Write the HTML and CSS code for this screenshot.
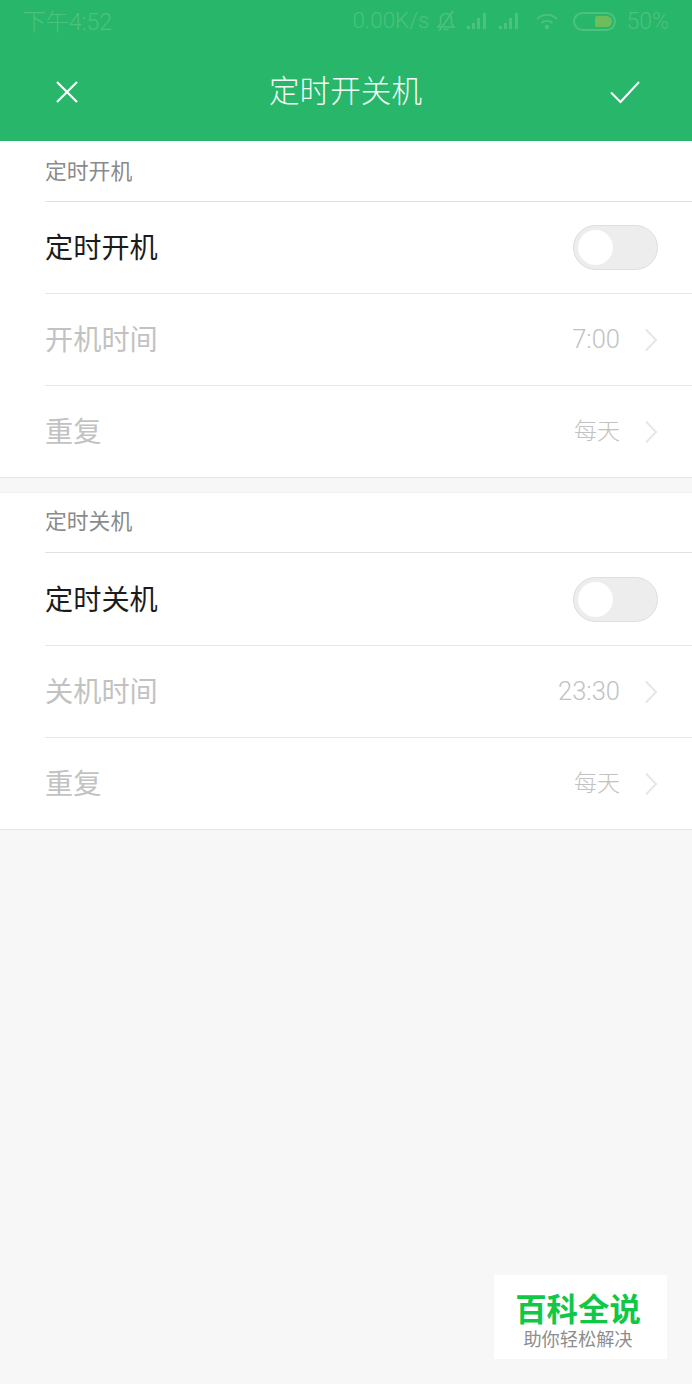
FILE: index.html
```html
<!DOCTYPE html>
<html>
<head>
    <title>定时开关机</title>
    <link rel="stylesheet" href="styles.css">
</head>
<body>
    <div class="header">
        <div class="status-bar">
            <span class="status-time">下午4:52</span>
            <div class="status-right">
                <span class="status-speed">0.00K/s</span>
                <svg class="bell" width="22" height="24" viewBox="0 0 22 24" fill="none" stroke="#4cc27f" stroke-width="1.6">
                    <path d="M3 18h16l-2.500-3v-5a5.500 5.500 0 0 0-11 0v5z"/>
                    <path d="M8.500 20.500h5"/>
                    <path d="M4 22L18 2"/>
                </svg>
                <svg class="signal" width="22" height="20" viewBox="0 0 22 20" fill="#4cc27f">
                    <rect x="1" y="15" width="3" height="3"/>
                    <rect x="6" y="12" width="3" height="6"/>
                    <rect x="11" y="7" width="3" height="11"/>
                    <rect x="17" y="2" width="3" height="16"/>
                </svg>
                <svg class="signal" width="22" height="20" viewBox="0 0 22 20" fill="#4cc27f">
                    <rect x="1" y="15" width="3" height="3"/>
                    <rect x="6" y="12" width="3" height="6"/>
                    <rect x="11" y="7" width="3" height="11"/>
                    <rect x="17" y="2" width="3" height="16"/>
                </svg>
                <svg class="wifi" width="26" height="20" viewBox="0 0 26 20" fill="none" stroke="#4cc27f" stroke-width="1.800">
                    <path d="M3 8a14 14 0 0 1 20 0"/>
                    <path d="M7.500 12a8 8 0 0 1 11 0"/>
                    <circle cx="13" cy="16" r="1.300" fill="#4cc27f"/>
                </svg>
                <div class="battery"><div class="battery-level"></div></div>
                <span class="status-percent">50%</span>
            </div>
        </div>
        <div class="title-bar">
            <svg width="26" height="26" viewBox="0 0 26 26" fill="none" stroke="#fff" stroke-width="2.200">
                <path d="M3 3L23 23M23 3L3 23"/>
            </svg>
            <span class="title">定时开关机</span>
            <svg width="32" height="26" viewBox="0 0 32 26" fill="none" stroke="#fff" stroke-width="2">
                <path d="M2 13.500L11.500 23L30 3"/>
            </svg>
        </div>
    </div>

    <div class="section">
        <div class="section-title">定时开机</div>
        <div class="row">
            <span class="row-label on">定时开机</span>
            <div class="switch"><div class="knob"></div></div>
        </div>
        <div class="row">
            <span class="row-label">开机时间</span>
            <div class="row-value">
                <span class="value-time">7:00</span>
                <svg class="arrow" width="14" height="24" viewBox="0 0 14 24" fill="none" stroke="#e6e6e6" stroke-width="2">
                    <path d="M2 1.500L12 12L2 22.500"/>
                </svg>
            </div>
        </div>
        <div class="row">
            <span class="row-label">重复</span>
            <div class="row-value">
                <span class="value-cn">每天</span>
                <svg class="arrow" width="14" height="24" viewBox="0 0 14 24" fill="none" stroke="#e6e6e6" stroke-width="2">
                    <path d="M2 1.500L12 12L2 22.500"/>
                </svg>
            </div>
        </div>
    </div>

    <div class="section second">
        <div class="section-title">定时关机</div>
        <div class="row">
            <span class="row-label on">定时关机</span>
            <div class="switch"><div class="knob"></div></div>
        </div>
        <div class="row">
            <span class="row-label">关机时间</span>
            <div class="row-value">
                <span class="value-time">23:30</span>
                <svg class="arrow" width="14" height="24" viewBox="0 0 14 24" fill="none" stroke="#e6e6e6" stroke-width="2">
                    <path d="M2 1.500L12 12L2 22.500"/>
                </svg>
            </div>
        </div>
        <div class="row">
            <span class="row-label">重复</span>
            <div class="row-value">
                <span class="value-cn">每天</span>
                <svg class="arrow" width="14" height="24" viewBox="0 0 14 24" fill="none" stroke="#e6e6e6" stroke-width="2">
                    <path d="M2 1.500L12 12L2 22.500"/>
                </svg>
            </div>
        </div>
    </div>

    <div class="watermark">
        <div class="watermark-name">百科全说</div>
        <div class="watermark-sub">助你轻松解决</div>
    </div>
</body>
</html>
```

FILE: styles.css
```css
html, body {
    margin: 0;
    padding: 0;
}
body {
    position: relative;
    width: 692px;
    height: 1384px;
    overflow: hidden;
    background: #f7f7f7;
    font-family: "Roboto", "Noto Sans CJK SC", sans-serif;
    font-weight: 300;
}
.header {
    height: 141px;
    background: #28b66a;
    color: #fff;
}
.status-bar {
    height: 42px;
    padding: 0 23px;
    display: flex;
    align-items: center;
    justify-content: space-between;
    font-size: 23px;
    color: #4cc27f;
}
.status-bar span {
    margin-bottom: 3px;
}
.status-bar .status-percent {
    margin-bottom: 0;
}
.status-right {
    display: flex;
    align-items: center;
}
.status-speed {
    font-size: 22.400px;
}
.bell {
    margin-left: 6px;
}
.signal {
    margin-left: 9px;
}
.signal + .signal {
    margin-left: 10px;
}
.wifi {
    margin-left: 14px;
}
.battery {
    width: 35px;
    height: 15px;
    margin-left: 13px;
    margin-right: 10px;
    border: 2px solid #4cc27f;
    border-radius: 10px;
    display: flex;
    align-items: center;
    justify-content: flex-end;
    padding: 0 2px;
}
.battery-level {
    width: 17px;
    height: 11px;
    background: #6cbd5c;
    border-radius: 2px 6px 6px 2px;
}
.title-bar {
    height: 99px;
    padding: 0 51px 0 54px;
    display: flex;
    align-items: center;
    justify-content: space-between;
}
.title {
    font-size: 30.600px;
    color: #f2fbf6;
    margin-left: 2px;
    margin-bottom: 6px;
}
.section {
    background: #fff;
    padding-left: 45px;
    border-bottom: 1px solid #e6e6e6;
}
.second {
    margin-top: 14px;
    border-top: 1px solid #efefef;
}
.section-title {
    height: 60px;
    line-height: 61px;
    font-size: 21.800px;
    font-weight: 400;
    color: #8a8a8a;
    border-bottom: 1px solid #e2e2e2;
}
.second .section-title {
    height: 59px;
    line-height: 58px;
}
.row {
    height: 91px;
    padding-right: 34px;
    display: flex;
    align-items: center;
    justify-content: space-between;
    border-bottom: 1px solid #e6e6e6;
}
.second .row:nth-child(2) {
    height: 92px;
}
.row:last-child {
    border-bottom: none;
}
.row-label {
    font-size: 28.200px;
    font-weight: 400;
    color: #c2c2c2;
    margin-bottom: 4px;
}
.row-label.on {
    color: #1c1c1c;
}
.row-value {
    display: flex;
    align-items: center;
    font-size: 25.500px;
    color: #c2c2c2;
}
.value-time {
    margin-bottom: 2px;
}
.value-cn {
    font-size: 23px;
    margin-bottom: 5px;
}
.arrow {
    margin-left: 24px;
}
.switch {
    width: 85px;
    height: 45px;
    box-sizing: border-box;
    background: #ededed;
    border: 1px solid #dedede;
    border-radius: 23px;
    display: flex;
    align-items: center;
    padding-left: 4px;
}
.knob {
    width: 35px;
    height: 35px;
    background: #fff;
    border-radius: 50%;
}
.watermark {
    position: absolute;
    left: 494px;
    top: 1275px;
    width: 173px;
    height: 84px;
    background: #fff;
    text-align: center;
    padding-right: 5px;
    box-sizing: border-box;
}
.watermark-name {
    margin-top: 17px;
    font-size: 31.400px;
    line-height: 38px;
    font-weight: 700;
    color: #10c746;
}
.watermark-sub {
    margin-top: -2px;
    font-size: 18.200px;
    line-height: 23px;
    font-weight: 400;
    color: #8d8d8d;
}
```
